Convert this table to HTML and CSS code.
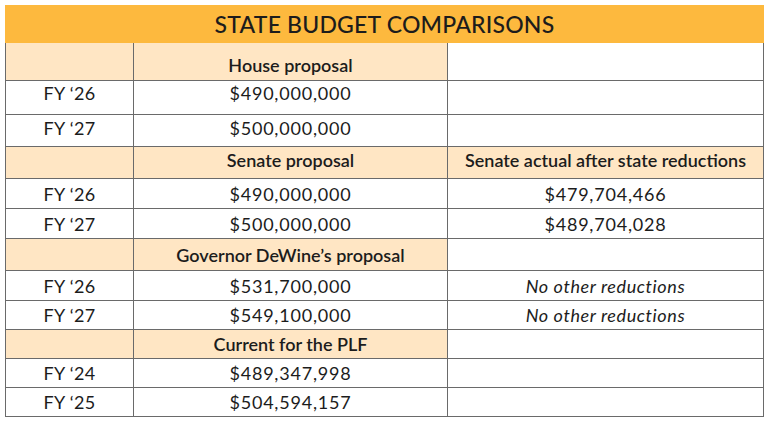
FILE: index.html
```html
<!DOCTYPE html>
<html>
<head>
<meta charset="utf-8">
<link rel="stylesheet" href="styles.css">
</head>
<body>
<div class="wrap">
  <div class="title">STATE BUDGET COMPARISONS</div>
  <div class="grid">
    <div class="c h"></div><div class="c h b first">House proposal</div><div class="c"></div>
    <div class="c fy up">FY ‘26</div><div class="c up">$490,000,000</div><div class="c"></div>
    <div class="c fy up2">FY ‘27</div><div class="c up2">$500,000,000</div><div class="c"></div>
    <div class="c h"></div><div class="c h b up2">Senate proposal</div><div class="c h b up2">Senate actual after state reductions</div>
    <div class="c fy">FY ‘26</div><div class="c">$490,000,000</div><div class="c">$479,704,466</div>
    <div class="c fy">FY ‘27</div><div class="c">$500,000,000</div><div class="c">$489,704,028</div>
    <div class="c h"></div><div class="c h b">Governor DeWine’s proposal</div><div class="c"></div>
    <div class="c fy">FY ‘26</div><div class="c">$531,700,000</div><div class="c i">No other reductions</div>
    <div class="c fy">FY ‘27</div><div class="c">$549,100,000</div><div class="c i">No other reductions</div>
    <div class="c h"></div><div class="c h b">Current for the PLF</div><div class="c"></div>
    <div class="c fy">FY ‘24</div><div class="c">$489,347,998</div><div class="c"></div>
    <div class="c fy">FY ‘25</div><div class="c">$504,594,157</div><div class="c"></div>
  </div>
</div>
</body>
</html>
```
FILE: styles.css
```css
html, body {
  margin: 0;
  padding: 0;
  background: #ffffff;
}
body {
  font-family: Lato, "Noto Sans", sans-serif;
  color: #1c1c1c;
}
.wrap {
  margin: 5px 0 0 5px;
  width: 759px;
}
.title {
  height: 38px;
  background: #fdb93e;
  display: flex;
  align-items: center;
  justify-content: center;
  font-size: 23px;
  font-weight: 500;
  letter-spacing: 0.2px;
}
.grid {
  display: grid;
  grid-template-columns: 128px 314px 316px;
  grid-template-rows: 38px 34px 32px 32px 30px 30px 32px 30px 29px 29px 29px 29px;
  border-left: 1px solid #6a6a6a;
}
.c {
  border-right: 1px solid #6a6a6a;
  border-bottom: 1px solid #6a6a6a;
  display: flex;
  align-items: center;
  justify-content: center;
  font-size: 18px;
  letter-spacing: 0.8px;
}
.fy {
  letter-spacing: 0.3px;
}
.h {
  background: #ffe6c4;
}
.b {
  font-weight: 600;
  letter-spacing: 0;
}
.i {
  font-style: italic;
  letter-spacing: 0.6px;
}
.first {
  padding-top: 6px;
}
.up {
  padding-bottom: 9px;
}
.up2 {
  padding-bottom: 5px;
}
```
